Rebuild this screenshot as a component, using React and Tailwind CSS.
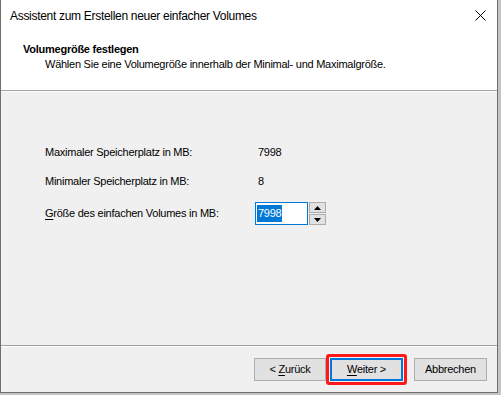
import React from "react";

const font = { fontFamily: '"Segoe UI", "Liberation Sans", Arial, sans-serif' };

const Btn = ({ children, className = "" }) => (
  <div
    className={
      "h-[23px] flex items-center justify-center bg-[#e1e1e1] border border-[#adadad] text-[11px] text-black " +
      className
    }
  >
    {children}
  </div>
);

const Row = ({ label, children }) => (
  <div className="flex items-center h-[23px]">
    <div className="w-[210px] text-[11px] text-black">{label}</div>
    <div className="text-[11px] text-black">{children}</div>
  </div>
);

export default function App() {
  return (
    <div className="w-[501px] h-[395px] bg-[#c4c4c4] overflow-hidden tracking-[-0.25px]" style={font}>
      <div className="w-[498px] h-[393px] flex flex-col border-l border-r border-b border-[#6f6f6f] bg-[#f0f0f0]">
        {/* title bar */}
        <div className="h-[32px] bg-white flex items-center justify-between pl-[9px] pr-[11px]">
          <span className="text-[12px] text-black tracking-[-0.3px]">Assistent zum Erstellen neuer einfacher Volumes</span>
          <svg width="11" height="11" viewBox="0 0 11 11" className="mt-[-1px]">
            <path d="M0.5 0.5 L10.5 10.5 M10.5 0.5 L0.5 10.5" stroke="#000" strokeWidth="1" />
          </svg>
        </div>

        {/* header */}
        <div className="h-[59px] bg-white border-b border-[#a0a0a0] pt-[10px]">
          <div className="pl-[22px] text-[11px] font-bold text-black leading-[15px]">Volumegröße festlegen</div>
          <div className="pl-[44px] text-[11px] text-black leading-[15px]">
            Wählen Sie eine Volumegröße innerhalb der Minimal- und Maximalgröße.
          </div>
        </div>
        <div className="h-px bg-white" />

        {/* body */}
        <div className="flex-1 pl-[44px] pt-[49px] flex flex-col gap-[6px]">
          <Row label="Maximaler Speicherplatz in MB:">
            <span className="pl-[3px]">7998</span>
          </Row>
          <Row label="Minimaler Speicherplatz in MB:">
            <span className="pl-[3px]">8</span>
          </Row>
          <div className="flex items-center h-[23px] mt-[3px]">
            <div className="w-[210px] text-[11px] text-black">
              <span className="underline underline-offset-2">G</span>röße des einfachen Volumes in MB:
            </div>
            <div className="flex items-center">
              <div className="w-[53px] h-[23px] border border-[#0078d7] bg-white flex items-center pl-[1px]">
                <span className="bg-[#0078d7] text-white text-[11px] leading-[17px] px-[1px]">7998</span>
              </div>
              <div className="flex flex-col gap-[1px] ml-[1px]">
                <div className="w-[17px] h-[11px] bg-[#e1e1e1] border border-[#adadad] flex items-center justify-center">
                  <svg width="7" height="4" viewBox="0 0 7 4">
                    <path d="M3.5 0 L7 4 L0 4 Z" fill="#000" />
                  </svg>
                </div>
                <div className="w-[17px] h-[11px] bg-[#e1e1e1] border border-[#adadad] flex items-center justify-center">
                  <svg width="7" height="4" viewBox="0 0 7 4">
                    <path d="M0 0 L7 0 L3.5 4 Z" fill="#000" />
                  </svg>
                </div>
              </div>
            </div>
          </div>
        </div>

        {/* footer */}
        <div className="h-[47px] border-t border-[#a0a0a0]">
          <div className="h-px bg-white" />
          <div className="flex items-center pl-[253px] pt-[7px]">
            <Btn className="w-[72px]">
              &lt;&nbsp;<span className="underline underline-offset-2">Z</span>urück
            </Btn>
            <div className="p-[1px] border-[3px] border-[#ff1a1a] rounded-[3px]">
              <div className="w-[73px] h-[23px] flex items-center justify-center bg-[#e1e1e1] border-2 border-[#0078d7] text-[11px] text-black">
                <span>
                  <span className="underline underline-offset-2">W</span>eiter &gt;
                </span>
              </div>
            </div>
            <Btn className="w-[73px] ml-[7px]">Abbrechen</Btn>
          </div>
        </div>
      </div>
    </div>
  );
}
